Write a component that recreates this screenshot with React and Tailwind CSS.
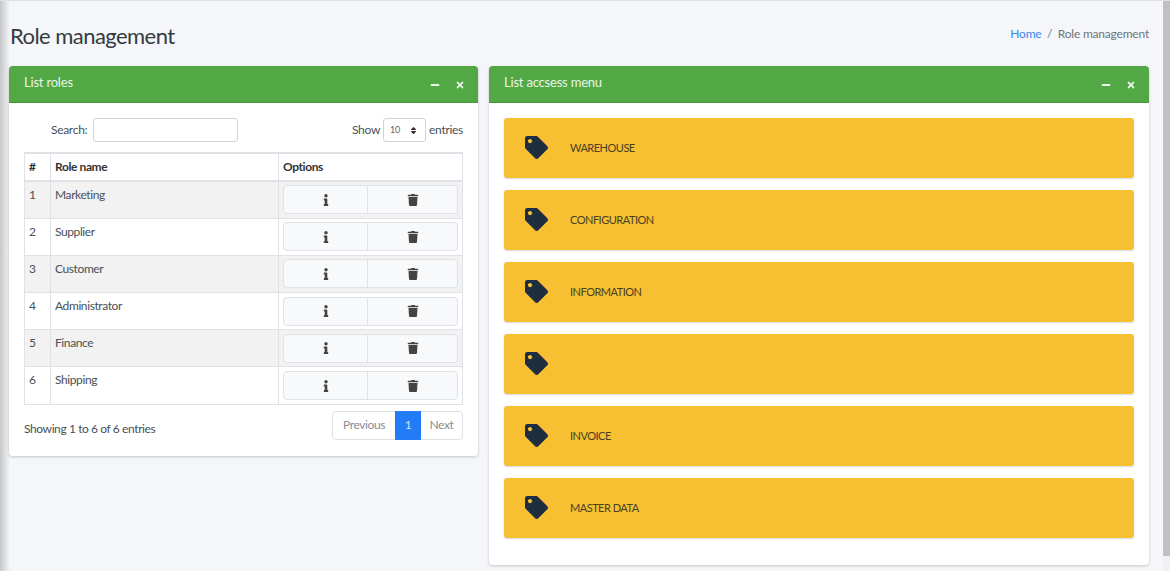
import React from "react";
import { FaInfo, FaTrash, FaTag, FaMinus, FaTimes, FaSort } from "react-icons/fa";

const roles = ["Marketing", "Supplier", "Customer", "Administrator", "Finance", "Shipping"];
const menus = ["WAREHOUSE", "CONFIGURATION", "INFORMATION", "", "INVOICE", "MASTER DATA"];

function Panel({ title, className, children }) {
  return (
    <div className={"bg-white rounded-[4px] shadow-[0_1px_3px_rgba(0,0,0,0.2)] " + className}>
      <div className="h-[37px] bg-[#51a845] border-b border-[#439a3a] rounded-t-[4px] pl-[15px] pr-[13px] flex items-start justify-between text-[#e9f5e7]">
        <span className="text-[13px] leading-[33px] tracking-[-0.2px]">{title}</span>
        <div className="flex items-center gap-[15px] mt-[14px]">
          <FaMinus className="w-[10px] h-[10px]" />
          <FaTimes className="w-[10px] h-[10px]" />
        </div>
      </div>
      {children}
    </div>
  );
}

export default function App() {
  return (
    <div className="relative h-[571px] overflow-hidden bg-[#f4f6f9] border-t border-[#dee2e6] text-[#495057] font-['Source_Sans_Pro','Lato','Noto_Sans',sans-serif]">
      {/* sidebar shadow */}
      <div className="absolute left-0 top-0 bottom-0 w-[10px] bg-gradient-to-r from-[#c6c7c9] to-[#f4f6f9]" />
      {/* scrollbar */}
      <div className="absolute right-0 top-0 bottom-0 w-[7px] bg-[#f1f1f1]">
        <div className="h-[555px] bg-[#c1c1c1]" />
      </div>

      <div className="relative pl-[9px] pr-[21px]">
        <div className="h-[65px] flex items-start justify-between">
          <h1 className="text-[22px] leading-[28px] tracking-[-0.55px] mt-[21px] ml-[1px] text-[#343a40]">Role management</h1>
          <div className="flex text-[12px] leading-[16px] tracking-[-0.2px] mt-[25px] text-[#6c757d]">
            <span className="text-[#3a86f0]">Home</span>
            <span className="mx-[5.5px]">/</span>
            <span>Role management</span>
          </div>
        </div>

        <div className="flex items-start gap-[11px]">
          <Panel title="List roles" className="w-[469px] h-[390px]">
            <div className="px-[15px] pt-[15px]">
              <div className="flex items-center justify-between h-[24px] text-[12px] tracking-[-0.3px] mb-[10px]">
                <div className="flex items-center pl-[27px] gap-[6px]">
                  <span>Search:</span>
                  <input className="w-[145px] h-[24px] bg-white border border-[#ced4da] rounded-[3px]" />
                </div>
                <div className="flex items-center gap-[3px]">
                  <span>Show</span>
                  <div className="w-[43px] h-[24px] border border-[#ced4da] rounded-[3px] flex items-center justify-between pl-[6px] pr-[7px] text-[9px] text-[#666]">
                    <span>10</span>
                    <FaSort className="w-[9px] h-[9px] text-[#333]" />
                  </div>
                  <span>entries</span>
                </div>
              </div>

              <table className="w-[439px] table-fixed border-collapse text-[12px] tracking-[-0.4px] border border-t-2 border-[#dee2e6]">
                <thead>
                  <tr className="h-[28px] border-b-2 border-[#dee2e6] text-[#333]">
                    <th className="w-[26px] text-left font-bold pl-[4px] border-r border-[#dee2e6]">#</th>
                    <th className="w-[228px] text-left font-bold pl-[4px] border-r border-[#dee2e6]">Role name</th>
                    <th className="text-left font-bold pl-[4px]">Options</th>
                  </tr>
                </thead>
                <tbody>
                  {roles.map((r, i) => (
                    <tr key={r} className={"h-[37.2px] border-b border-[#dee2e6] " + (i % 2 === 0 ? "bg-[#f2f2f2]" : "bg-white")}>
                      <td className="align-top pl-[4px] pt-[4px] border-r border-[#dee2e6]">{i + 1}</td>
                      <td className="align-top pl-[4px] pt-[4px] border-r border-[#dee2e6]">{r}</td>
                      <td className="px-[4px]">
                        <div className="flex h-[29px] bg-[#f8f9fa] border border-[#dfe2e6] rounded-[4px]">
                          <button className="w-[84px] flex items-center justify-center border-r border-[#dfe2e6]">
                            <FaInfo className="w-[12px] h-[12px] text-[#444]" />
                          </button>
                          <button className="flex-1 flex items-center justify-center">
                            <FaTrash className="w-[12px] h-[12px] text-[#444]" />
                          </button>
                        </div>
                      </td>
                    </tr>
                  ))}
                </tbody>
              </table>

              <div className="flex items-start justify-between mt-[6px] tracking-[-0.4px]">
                <span className="text-[12px] mt-[9px]">Showing 1 to 6 of 6 entries</span>
                <div className="flex h-[29px] text-[12px] text-[#868e96] border border-[#dee2e6] rounded-[4px] bg-white">
                  <span className="w-[62px] flex items-center justify-center">Previous</span>
                  <span className="w-[26px] -my-[1px] flex items-center justify-center bg-[#217cf5] text-[#cfe2fc]">1</span>
                  <span className="w-[41px] flex items-center justify-center">Next</span>
                </div>
              </div>
            </div>
          </Panel>

          <Panel title="List accsess menu" className="w-[660px] h-[499px]">
            <div className="px-[15px] pt-[15px] flex flex-col gap-[12px]">
              {menus.map((m, i) => (
                <div key={i} className="h-[60px] bg-[#f6c032] rounded-[3px] shadow-[0_1px_2px_rgba(0,0,0,0.15)] flex items-center pl-[21px] text-[11px] tracking-[-0.5px] text-[#4a4023]">
                  <FaTag className="w-[23px] h-[23px] text-[#1f2d41] -mt-[2px] shrink-0" />
                  <span className="ml-[22px]">{m}</span>
                </div>
              ))}
            </div>
          </Panel>
        </div>
      </div>
    </div>
  );
}
